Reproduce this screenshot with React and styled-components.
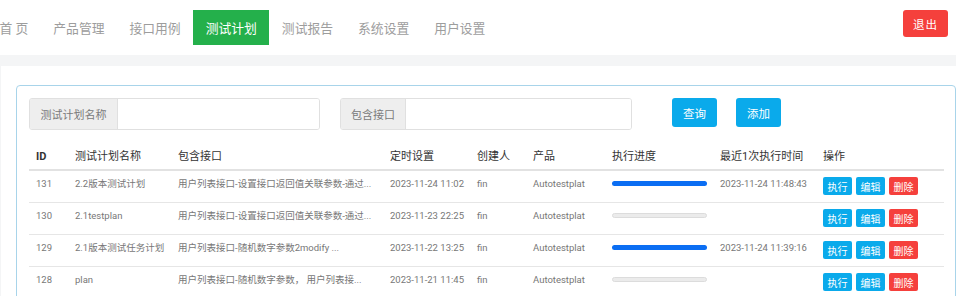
import React from "react";
import styled, { createGlobalStyle } from "styled-components";

const Global = createGlobalStyle`
  html, body { margin: 0; padding: 0; background: #f4f5f6; overflow: hidden; }
  body { font-family: Roboto, "Noto Sans CJK SC", sans-serif; }
  * { box-sizing: border-box; }
`;

const Nav = styled.nav`
  height: 55px;
  background: #fff;
  display: flex;
  align-items: center;
  padding-right: 8px;
`;

const Menu = styled.ul`
  display: flex;
  list-style: none;
  margin: 0 0 0 -13px;
  padding: 0;
  flex: 1;
`;

const MenuItem = styled.li`
  height: 35px;
  padding: 0 12.5px;
  display: flex;
  align-items: center;
  font-size: 12.8px;
  color: ${(p) => (p.$active ? "#fff" : "#9d9d9d")};
  background: ${(p) => (p.$active ? "#24b04b" : "transparent")};
  white-space: pre;
`;

const Logout = styled.button`
  width: 45px;
  height: 27px;
  margin-top: -8px;
  border: none;
  border-radius: 3px;
  background: #f5403c;
  color: #fff;
  font-family: inherit;
  font-size: 11.5px;
  letter-spacing: 1px;
  padding: 0;
`;

const Panel = styled.main`
  margin: 11px 0 0 1px;
  background: #fff;
  padding: 19px 0 0 15px;
  height: 240px;
`;

const Box = styled.section`
  border: 1px solid #a8d4ea;
  border-radius: 4px;
  padding: 12px 11px 0 12px;
  height: 260px;
`;

const SearchBar = styled.div`
  display: flex;
  align-items: flex-start;
`;

const InputGroup = styled.div`
  display: flex;
  height: 32px;
  width: ${(p) => p.$w}px;
  margin-right: ${(p) => p.$mr}px;
  border: 1px solid #e0e0e0;
  border-radius: 3px;
  overflow: hidden;
`;

const Addon = styled.span`
  width: ${(p) => p.$w}px;
  background: #eeeeee;
  border-right: 1px solid #e0e0e0;
  display: flex;
  align-items: center;
  justify-content: center;
  font-size: 11px;
  color: #7a7a7a;
`;

const Input = styled.input`
  flex: 1;
  border: none;
  outline: none;
  background: #fff;
`;

const Btn = styled.button`
  width: 45px;
  height: 29px;
  border: none;
  border-radius: 3px;
  background: #0aaaeb;
  color: #fff;
  font-family: inherit;
  font-size: 11.5px;
  padding: 0;
  margin-right: ${(p) => p.$mr || 0}px;
`;

const Table = styled.table`
  margin-top: 16px;
  width: 915px;
  border-collapse: collapse;
  table-layout: fixed;
`;

const Th = styled.th`
  text-align: left;
  font-weight: ${(p) => (p.$bold ? 700 : 400)};
  font-size: 11px;
  color: #333;
  line-height: 13px;
  padding: 4px 0 6px 7px;
  border-bottom: 2px solid #e2e2e2;
  white-space: nowrap;
`;

const Td = styled.td`
  vertical-align: top;
  font-size: 9.5px;
  color: #777;
  line-height: 13px;
  padding: 6px 0 7px 7px;
  border-bottom: 1px solid #e6e6e6;
  white-space: nowrap;
  overflow: hidden;
`;

const Bar = styled.div`
  width: 95px;
  height: 5px;
  margin-top: 4px;
  border-radius: 3px;
  background: ${(p) => (p.$done ? "#0b6ef3" : "#ebebeb")};
  border: ${(p) => (p.$done ? "none" : "1px solid #dcdcdc")};
`;

const Actions = styled.div`
  display: flex;
  gap: 4px;
`;

const SmallBtn = styled.button`
  width: 29px;
  height: 18px;
  border: none;
  border-radius: 2px;
  padding: 0;
  font-family: inherit;
  font-size: 10px;
  color: #fff;
  background: ${(p) => (p.$danger ? "#f5403c" : "#0aaaeb")};
`;

const navItems = ["首 页", "产品管理", "接口用例", "测试计划", "测试报告", "系统设置", "用户设置"];

const rows = [
  { id: 131, name: "2.2版本测试计划", iface: "用户列表接口-设置接口返回值关联参数-通过...", timer: "2023-11-24 11:02", done: true, last: "2023-11-24 11:48:43" },
  { id: 130, name: "2.1testplan", iface: "用户列表接口-设置接口返回值关联参数-通过...", timer: "2023-11-23 22:25", done: false, last: "" },
  { id: 129, name: "2.1版本测试任务计划", iface: "用户列表接口-随机数字参数2modify ...", timer: "2023-11-22 13:25", done: true, last: "2023-11-24 11:39:16" },
  { id: 128, name: "plan", iface: "用户列表接口-随机数字参数， 用户列表接...", timer: "2023-11-21 11:45", done: false, last: "" },
];

const cols = [39, 103, 212, 87, 56, 79, 108, 103, 128];

export default function App() {
  return (
    <>
      <Global />
      <Nav>
        <Menu>
          {navItems.map((n) => (
            <MenuItem key={n} $active={n === "测试计划"}>{n}</MenuItem>
          ))}
        </Menu>
        <Logout>退出</Logout>
      </Nav>
      <Panel>
        <Box>
          <SearchBar>
            <InputGroup $w={291} $mr={20}>
              <Addon $w={88}>测试计划名称</Addon>
              <Input />
            </InputGroup>
            <InputGroup $w={292} $mr={40}>
              <Addon $w={65}>包含接口</Addon>
              <Input />
            </InputGroup>
            <Btn $mr={19}>查询</Btn>
            <Btn>添加</Btn>
          </SearchBar>
          <Table>
            <colgroup>
              {cols.map((w, i) => (
                <col key={i} style={{ width: w }} />
              ))}
            </colgroup>
            <thead>
              <tr>
                <Th $bold>ID</Th>
                <Th>测试计划名称</Th>
                <Th>包含接口</Th>
                <Th>定时设置</Th>
                <Th>创建人</Th>
                <Th>产品</Th>
                <Th>执行进度</Th>
                <Th>最近1次执行时间</Th>
                <Th>操作</Th>
              </tr>
            </thead>
            <tbody>
              {rows.map((r) => (
                <tr key={r.id}>
                  <Td>{r.id}</Td>
                  <Td>{r.name}</Td>
                  <Td>{r.iface}</Td>
                  <Td>{r.timer}</Td>
                  <Td>fin</Td>
                  <Td>Autotestplat</Td>
                  <Td>
                    <Bar $done={r.done} />
                  </Td>
                  <Td>{r.last}</Td>
                  <Td>
                    <Actions>
                      <SmallBtn>执行</SmallBtn>
                      <SmallBtn>编辑</SmallBtn>
                      <SmallBtn $danger>删除</SmallBtn>
                    </Actions>
                  </Td>
                </tr>
              ))}
            </tbody>
          </Table>
        </Box>
      </Panel>
    </>
  );
}
